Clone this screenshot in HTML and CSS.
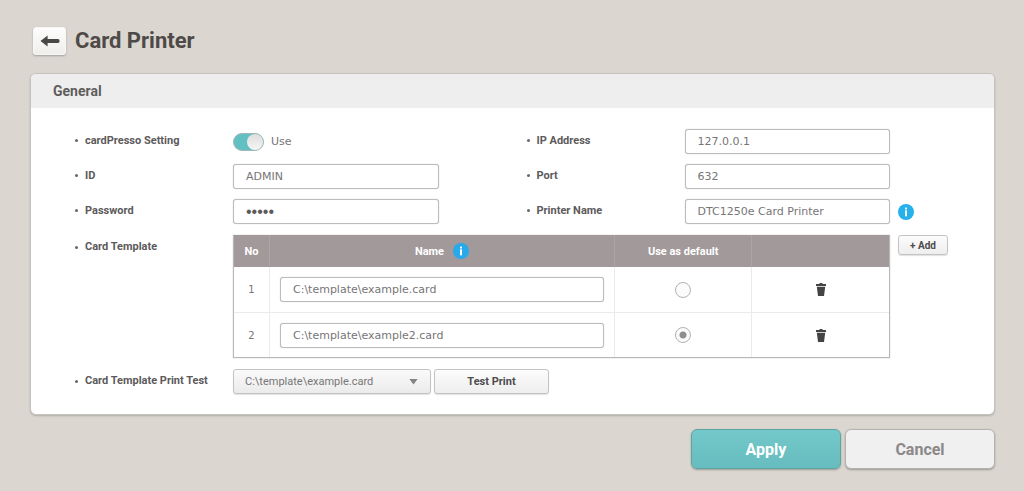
FILE: index.html
```
<!DOCTYPE html>
<html lang="en">
<head>
  <meta charset="UTF-8" />
  <meta name="viewport" content="width=device-width, initial-scale=1" />
  <title>Card Printer</title>
  <link rel="stylesheet" href="styles.css">
</head>
<body>
  <header class="page-header">
    <button type="button" class="back-btn" aria-label="Back">
      <svg width="20" height="12" viewBox="0 0 20 12"><path d="M0.5 6 L7.6 0.6 V4.1 H18 Q19.6 4.1 19.6 6 Q19.6 7.9 18 7.9 H7.6 V11.4 Z" fill="#4a4847"/></svg>
    </button>
    <h1>Card Printer</h1>
  </header>

  <form class="page-form">
    <section class="panel">
      <h2 class="panel-title">General</h2>
      <div class="panel-body">
        <label class="field-label" for="useCardpresso">cardPresso Setting</label>
        <div class="field">
          <input type="checkbox" id="useCardpresso" class="toggle" checked />
          <span class="toggle-text">Use</span>
        </div>
        <label class="field-label second" for="ipAddress">IP Address</label>
        <div class="field"><input type="text" id="ipAddress" class="text-input" value="127.0.0.1" /></div>

        <label class="field-label first" for="userId">ID</label>
        <div class="field"><input type="text" id="userId" class="text-input" value="ADMIN" /></div>
        <label class="field-label second" for="port">Port</label>
        <div class="field"><input type="text" id="port" class="text-input" value="632" /></div>

        <label class="field-label first" for="password">Password</label>
        <div class="field"><input type="password" id="password" class="text-input" value="admin" /></div>
        <label class="field-label second" for="printerName">Printer Name</label>
        <div class="field"><input type="text" id="printerName" class="text-input" value="DTC1250e Card Printer" /></div>
        <div class="side">
          <svg class="info" width="16" height="16" viewBox="0 0 16 16"><circle cx="8" cy="8" r="8" fill="#25b1ea"/><rect x="7" y="3.6" width="2" height="1.8" fill="#fff"/><rect x="7" y="6.3" width="2" height="6" fill="#fff"/></svg>
        </div>

        <span class="field-label first template-label">Card Template</span>
        <div class="template-list">
          <table class="templates">
            <colgroup>
              <col class="col-no" /><col class="col-name" /><col class="col-default" /><col class="col-delete" />
            </colgroup>
            <thead>
              <tr>
                <th>No</th>
                <th>
                  <span class="th-name">Name
                    <svg class="info" width="16" height="16" viewBox="0 0 16 16"><circle cx="8" cy="8" r="8" fill="#27a9ec"/><rect x="7" y="3.6" width="2" height="1.8" fill="#fff"/><rect x="7" y="6.3" width="2" height="6" fill="#fff"/></svg>
                  </span>
                </th>
                <th>Use as default</th>
                <th></th>
              </tr>
            </thead>
            <tbody>
              <tr>
                <td>1</td>
                <td class="name-cell"><input type="text" class="text-input" aria-label="Template 1" value="C:\template\example.card" /></td>
                <td><input type="radio" class="radio" name="defaultTemplate" aria-label="Use template 1 as default" /></td>
                <td>
                  <button type="button" class="delete-btn" aria-label="Delete template 1">
                    <svg width="10" height="13" viewBox="0 0 10 13"><path d="M3.5 0 H6.5 V1 H10 V3 H0 V1 H3.5 Z M0.8 3.8 H9.2 L8 13 H2 Z" fill="#454344"/></svg>
                  </button>
                </td>
              </tr>
              <tr>
                <td>2</td>
                <td class="name-cell"><input type="text" class="text-input" aria-label="Template 2" value="C:\template\example2.card" /></td>
                <td><input type="radio" class="radio" name="defaultTemplate" aria-label="Use template 2 as default" checked /></td>
                <td>
                  <button type="button" class="delete-btn" aria-label="Delete template 2">
                    <svg width="10" height="13" viewBox="0 0 10 13"><path d="M3.5 0 H6.5 V1 H10 V3 H0 V1 H3.5 Z M0.8 3.8 H9.2 L8 13 H2 Z" fill="#454344"/></svg>
                  </button>
                </td>
              </tr>
            </tbody>
          </table>
        </div>
        <div class="side side-top">
          <button type="button" class="small-btn add-btn">+ Add</button>
        </div>

        <label class="field-label first print-label" for="printTest">Card Template Print Test</label>
        <div class="print-test">
          <span class="select-wrap">
            <select id="printTest">
              <option>C:\template\example.card</option>
              <option>C:\template\example2.card</option>
            </select>
          </span>
          <button type="button" class="small-btn test-btn">Test Print</button>
        </div>
      </div>
    </section>

    <div class="actions">
      <button type="button" class="action-btn apply">Apply</button>
      <button type="button" class="action-btn cancel">Cancel</button>
    </div>
  </form>
</body>
</html>
```
FILE: styles.css
```
* {
  box-sizing: border-box;
}
body {
  margin: 0;
  padding: 26px 29px 20px 30px;
  background: #dbd6d0;
  color: #555354;
  font-family: Roboto, "Liberation Sans", sans-serif;
  font-size: 11px;
}
button, input, select {
  font-family: inherit;
  margin: 0;
}
button {
  cursor: pointer;
}
.page-header {
  display: flex;
  align-items: center;
  gap: 9px;
  height: 29px;
  padding-left: 3px;
}
.back-btn {
  display: flex;
  align-items: center;
  justify-content: center;
  width: 33px;
  height: 28px;
  padding: 0;
  border: 1px solid #f8f7f6;
  border-radius: 3px;
  background: linear-gradient(#fdfdfd, #efeeed);
  box-shadow: 0 1px 2px rgba(0, 0, 0, 0.25);
}
h1 {
  margin: 0;
  font-size: 22px;
  line-height: 28px;
  font-weight: 700;
  color: #4d4a48;
}
.panel {
  margin-top: 18px;
  border: 1px solid #c5c3c1;
  border-radius: 6px;
  background: #fff;
  box-shadow: 0 1px 2px rgba(0, 0, 0, 0.2);
  overflow: hidden;
}
.panel-title {
  margin: 0;
  padding: 0 22px;
  font-size: 14px;
  line-height: 34px;
  font-weight: 700;
  color: #5f5d5c;
  background: #eeeeee;
}
.panel-body {
  display: grid;
  grid-template-columns: 158px minmax(0, 1fr) 246px minmax(0, 1fr) 104px;
  grid-auto-rows: minmax(35px, auto);
  align-items: center;
  padding: 16px 0 20px 44px;
}
.field-label {
  display: flex;
  align-items: center;
  gap: 7px;
  padding-bottom: 2px;
  font-weight: 700;
  line-height: 16px;
  color: #5c5a5b;
}
.field-label::before {
  content: "";
  width: 3px;
  height: 3px;
  border-radius: 50%;
  background: #6a6869;
}
.first {
  grid-column: 1;
}
.second {
  padding-left: 88px;
}
.field {
  display: flex;
  align-items: center;
  gap: 7px;
}
.text-input {
  width: 100%;
  height: 25px;
  padding: 0 12px;
  border: 1px solid #bdbcbc;
  border-radius: 3px;
  background: #fff;
  box-shadow: 0 0 1px #b5b4b4;
  color: #777576;
  font-family: "DejaVu Sans", sans-serif;
  font-size: 11px;
}
.text-input[type="password"] {
  font-family: "Liberation Sans", sans-serif;
  font-size: 16px;
  color: #5c5a5b;
}
.toggle {
  appearance: none;
  display: flex;
  width: 31px;
  height: 18px;
  border: 1px solid #a3b5b4;
  border-radius: 9px;
  background: #c9c9c9;
}
.toggle::before {
  content: "";
  width: 16px;
  height: 16px;
  border-radius: 50%;
  background: linear-gradient(#dedede, #f6f6f6);
}
.toggle:checked {
  justify-content: flex-end;
  background: #62c0c2;
}
.toggle-text {
  font-family: "DejaVu Sans", sans-serif;
  color: #777576;
}
.side {
  display: flex;
  padding-left: 8px;
}
.side-top {
  align-self: start;
  padding-top: 6px;
}
.info {
  display: block;
}

/* template table */
.template-label {
  align-self: start;
  padding-top: 10px;
}
.template-list {
  grid-column: 2 / 5;
  align-self: start;
  padding-top: 6px;
}
.templates {
  width: 100%;
  table-layout: fixed;
  border-collapse: separate;
  border-spacing: 0;
  border: 1px solid #b9b7b7;
  border-top: 0;
  box-shadow: 0 0 1px #b9b7b7;
}
.col-no {
  width: 35px;
}
.col-name {
  width: auto;
}
.col-default, .col-delete {
  width: 21%;
}
.templates th {
  height: 32px;
  padding: 0;
  background: #a2999b;
  color: #fff;
  font-weight: 700;
}
.th-name {
  display: flex;
  align-items: center;
  justify-content: center;
  gap: 9px;
}
.templates td {
  height: 45px;
  padding: 0;
  text-align: center;
  color: #777576;
  font-family: "DejaVu Sans", sans-serif;
  font-size: 10px;
}
.templates th + th {
  border-left: 1px solid #aca4a5;
}
.templates td + td {
  border-left: 1px solid #ebebeb;
}
.templates tbody tr + tr td {
  border-top: 1px solid #ebebeb;
}
.templates .name-cell {
  padding: 0 10px;
}
.radio {
  appearance: none;
  display: inline-block;
  width: 16px;
  height: 16px;
  border: 1px solid #b3b2b2;
  border-radius: 50%;
  background: #fbfbfb;
  vertical-align: middle;
}
.radio:checked {
  background: radial-gradient(circle, #8f8d8e 0 3px, #fbfbfb 4px);
}
.delete-btn {
  padding: 0;
  border: 0;
  background: none;
  vertical-align: middle;
}
.delete-btn svg {
  display: block;
}

.small-btn {
  height: 25px;
  padding: 0;
  border: 1px solid #c4c3c3;
  border-radius: 3px;
  background: linear-gradient(#fcfcfc, #eeeeee);
  box-shadow: 0 1px 1px rgba(0, 0, 0, 0.12);
  color: #4d4b4c;
  font-size: 11px;
  font-weight: 700;
}
.add-btn {
  width: 50px;
  height: 20px;
  font-size: 10px;
}
.print-label {
  padding-top: 12px;
}
.print-test {
  grid-column: 2 / -1;
  display: flex;
  gap: 3px;
  padding-top: 11px;
}
.test-btn {
  width: 115px;
}
.select-wrap {
  display: grid;
  align-items: center;
  width: 198px;
}
.select-wrap::after {
  content: "";
  grid-area: 1 / 1;
  justify-self: end;
  width: 9px;
  height: 6px;
  margin-right: 13px;
  background: #858384;
  clip-path: polygon(0 0, 100% 0, 50% 100%);
  pointer-events: none;
}
select {
  appearance: none;
  grid-area: 1 / 1;
  width: 100%;
  height: 25px;
  padding: 0 26px 0 11px;
  border: 1px solid #c4c3c3;
  border-radius: 3px;
  background: linear-gradient(#fafafa, #ebebeb);
  box-shadow: 0 1px 1px rgba(0, 0, 0, 0.12);
  color: #777576;
  font-size: 11px;
}

/* bottom buttons */
.actions {
  display: flex;
  justify-content: flex-end;
  gap: 4px;
  margin-top: 14px;
}
.action-btn {
  width: 150px;
  height: 40px;
  border: 1px solid #b5b3b1;
  border-radius: 6px;
  background: #f0f0f0;
  box-shadow: 0 1px 2px rgba(0, 0, 0, 0.3);
  color: #8a8888;
  font-size: 16px;
  font-weight: 700;
}
.apply {
  border-color: #5fa5a4;
  background: linear-gradient(#74c8ca, #66bcbe);
  color: #fff;
}
```
